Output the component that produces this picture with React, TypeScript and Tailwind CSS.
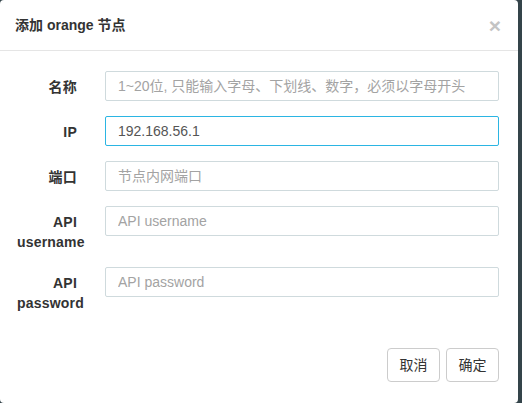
const font = { fontFamily: '"Liberation Sans", "Noto Sans CJK SC", sans-serif' };

const Field = ({
  label,
  placeholder,
  value,
  focused,
}: {
  label: string;
  placeholder?: string;
  value?: string;
  focused?: boolean;
}) => (
  <div className="flex items-start mb-[15px]">
    <label className="ml-[2px] w-[60px] shrink-0 pt-[6px] text-right text-[14px] leading-[20px] font-bold text-[#333] tracking-[0.2px]">
      {label}
    </label>
    <input
      readOnly
      defaultValue={value}
      placeholder={placeholder}
      className={
        'ml-[28px] h-[30px] w-[394px] rounded-[2px] border bg-white px-[12px] text-[14px] text-[#555] outline-none placeholder:text-[#a3a3a3] ' +
        (focused ? 'border-[#2bb5e3]' : 'border-[#cfdadd]')
      }
    />
  </div>
);

export default function App() {
  return (
    <div className="h-[403px] w-[522px] bg-[#34444a] overflow-hidden" style={font}>
      <div className="h-[403px] w-[518px] rounded-[4px] bg-white flex flex-col">
        {/* Header */}
        <div className="flex h-[51px] items-center justify-between border-b border-[#e5e5e5] px-[15px]">
          <h4 className="text-[14px] font-semibold text-[#333]">添加 orange 节点</h4>
          <span className="mr-[2px] text-[21px] font-bold leading-none text-[#c4c4c4]">×</span>
        </div>

        {/* Body */}
        <div className="px-[15px] pt-[20px]">
          <Field label="名称" placeholder="1~20位, 只能输入字母、下划线、数字，必须以字母开头" />
          <Field label="IP" value="192.168.56.1" focused />
          <Field label="端口" placeholder="节点内网端口" />
          <Field label="API username" placeholder="API username" />
          <Field label="API password" placeholder="API password" />
        </div>

        {/* Footer */}
        <div className="flex justify-end gap-[6px] px-[19px] pt-[20px]">
          <button className="h-[34px] w-[53px] rounded-[4px] border border-[#cccccc] bg-white text-[14px] text-[#333]">
            取消
          </button>
          <button className="h-[34px] w-[53px] rounded-[4px] border border-[#cccccc] bg-white text-[14px] text-[#333]">
            确定
          </button>
        </div>
      </div>
    </div>
  );
}
